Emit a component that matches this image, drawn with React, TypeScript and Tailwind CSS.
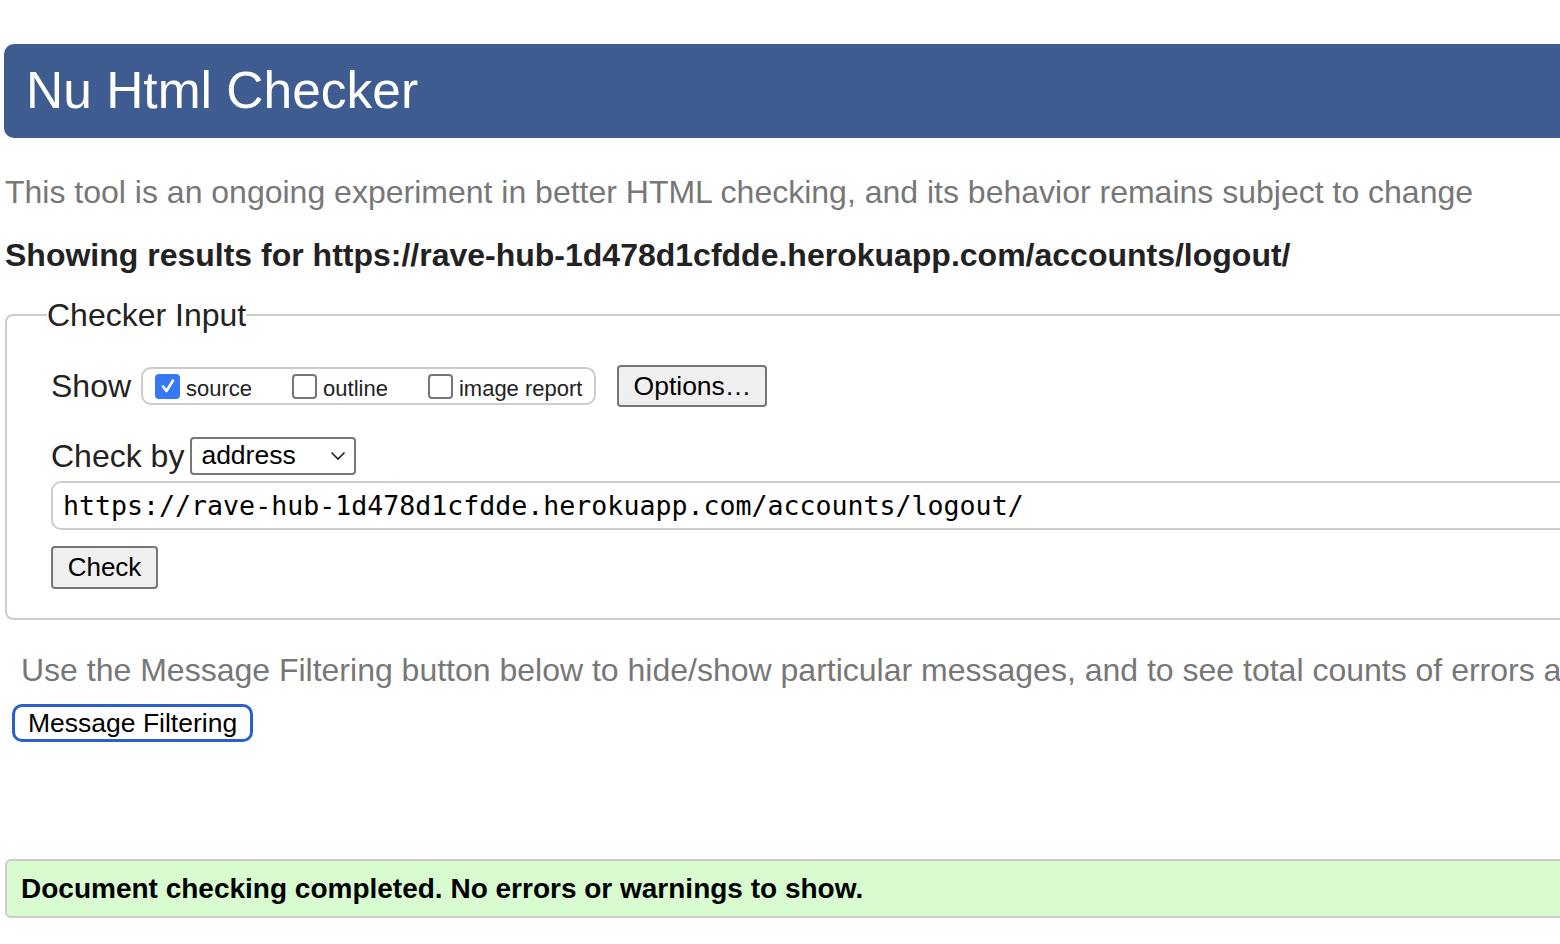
import React from 'react';

const sans = { fontFamily: '"Liberation Sans", Arial, sans-serif' };

function Box({ checked }: { checked?: boolean }) {
  if (checked) {
    return (
      <span className="inline-flex items-center justify-center w-[25px] h-[25px] rounded-[4px] bg-[#3478f6]">
        <svg width="18" height="18" viewBox="0 0 18 18" fill="none">
          <path d="M4 9.5 L7.5 14 L14 3.5" stroke="white" strokeWidth="2.6" strokeLinecap="round" strokeLinejoin="round" />
        </svg>
      </span>
    );
  }
  return <span className="inline-block w-[25px] h-[25px] rounded-[4px] border-2 border-[#767676] bg-white" />;
}

export default function App() {
  return (
    <div className="w-[1560px] h-[944px] overflow-hidden bg-white text-[#222]" style={sans}>
      <div className="w-[1700px] pt-[44px]">
        {/* Header */}
        <div className="ml-[4px] h-[94px] rounded-l-[10px] bg-[#3e5c8f] flex items-center pl-[22px]">
          <h1 className="text-[51.5px] leading-none text-white font-normal">Nu Html Checker</h1>
        </div>

        <p className="ml-[5px] mt-[35px] text-[32px] leading-[38px] text-[#777]">
          This tool is an ongoing experiment in better HTML checking, and its behavior remains subject to change
        </p>
        <p className="ml-[5px] mt-[25px] text-[32px] leading-[38px] font-bold text-[#222]">
          Showing results for https://rave-hub-1d478d1cfdde.herokuapp.com/accounts/logout/
        </p>

        {/* Fieldset */}
        <fieldset className="ml-[5px] mt-[24px] border-2 border-[#ccc] rounded-[8px] pl-[44px] pb-[29px] pt-[32px]">
          <legend className="text-[32px] leading-[34px] px-0 -ml-[4px]">Checker Input</legend>

          <div className="flex items-center h-[44px]">
            <span className="text-[32px] mr-[10px]">Show</span>
            <div className="flex items-center h-[38px] border-2 border-[#ccc] rounded-[10px] pl-[12px] pr-[12px]">
              <Box checked />
              <span className="text-[22px] ml-[6px] mr-[40px] mt-[4px]">source</span>
              <Box />
              <span className="text-[22px] ml-[6px] mr-[40px] mt-[4px]">outline</span>
              <Box />
              <span className="text-[22px] ml-[6px] mt-[4px]">image report</span>
            </div>
            <button className="ml-[21px] h-[42px] w-[150px] bg-[#efefef] border-2 border-[#767676] rounded-[4px] text-[26.5px] text-black">
              Options…
            </button>
          </div>

          <div className="flex items-center mt-[29px] h-[38px]">
            <span className="text-[32px] mr-[6px]">Check by</span>
            <div className="relative w-[166px] h-[38px] border-2 border-[#767676] rounded-[4px] flex items-center pl-[9px] text-[26.5px] text-black">
              address
              <svg className="absolute right-[8px] top-[12px]" width="16" height="10" viewBox="0 0 16 10" fill="none">
                <path d="M1.5 1.5 L8 8 L14.5 1.5" stroke="#222" strokeWidth="1.6" />
              </svg>
            </div>
          </div>

          <div
            className="mt-[6px] h-[49px] border-2 border-[#ccc] rounded-[10px] flex items-center pl-[10px] text-[26.6px] text-black"
            style={{ fontFamily: '"DejaVu Sans Mono", "Liberation Mono", monospace' }}
          >
            https://rave-hub-1d478d1cfdde.herokuapp.com/accounts/logout/
          </div>

          <button className="mt-[16px] h-[43px] w-[107px] bg-[#efefef] border-2 border-[#767676] rounded-[4px] text-[26px] text-black">
            Check
          </button>
        </fieldset>

        <p className="ml-[21px] mt-[31px] text-[32px] leading-[38px] text-[#777] whitespace-nowrap">
          Use the Message Filtering button below to hide/show particular messages, and to see total counts of errors and warnings.
        </p>
        <button className="ml-[12px] mt-[15px] h-[38px] px-[13px] border-[3px] border-[#2b5fcc] rounded-[10px] bg-white text-[26.5px] text-black leading-none">
          Message Filtering
        </button>

        <div className="ml-[5px] mt-[117px] h-[59px] border-2 border-[#ccc] rounded-l-[6px] bg-[#d8fcd0] flex items-center pl-[14px]">
          <span className="text-[28px] font-bold text-black">Document checking completed. No errors or warnings to show.</span>
        </div>
      </div>
    </div>
  );
}
